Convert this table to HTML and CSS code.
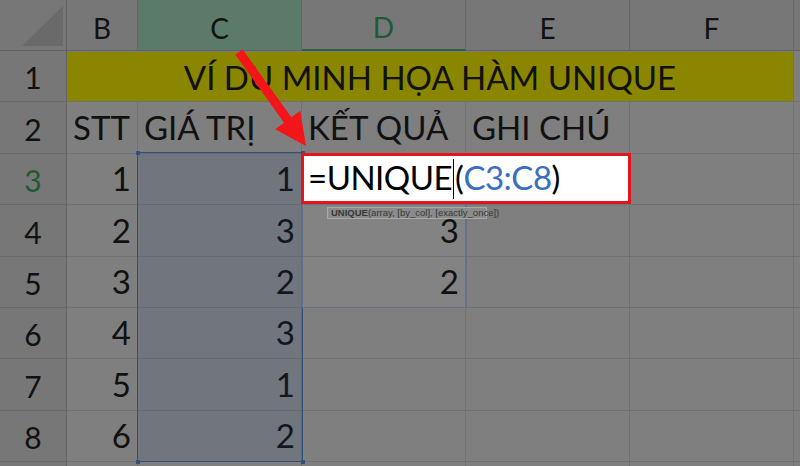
FILE: index.html
```html
<!DOCTYPE html>
<html lang="vi">
<head>
  <meta charset="UTF-8">
  <title>Hàm UNIQUE</title>
  <link rel="stylesheet" href="styles.css">
</head>
<body>
  <div class="sheet">
    <div class="grid">
      <!-- header row -->
      <div class="corner">
        <svg width="66" height="50" viewBox="0 0 66 50"><polygon points="22,46 63,6 63,46" fill="#6a6a6a"/></svg>
      </div>
      <div class="colhead">B</div>
      <div class="colhead picked">C</div>
      <div class="colhead active">D</div>
      <div class="colhead">E</div>
      <div class="colhead">F</div>
      <div class="colhead"></div>

      <!-- row 1 -->
      <div class="rowhead">1</div>
      <div class="cell title">VÍ DU MINH HỌA HÀM UNIQUE</div>
      <div class="cell"></div>

      <!-- row 2 -->
      <div class="rowhead">2</div>
      <div class="cell">STT</div>
      <div class="cell">GIÁ TRỊ</div>
      <div class="cell">KẾT QUẢ</div>
      <div class="cell">GHI CHÚ</div>
      <div class="cell"></div>
      <div class="cell"></div>

      <!-- row 3 -->
      <div class="rowhead active">3</div>
      <div class="cell num">1</div>
      <div class="cell num">1</div>
      <div class="cell"></div>
      <div class="cell"></div>
      <div class="cell"></div>
      <div class="cell"></div>

      <div class="rowhead">4</div>
      <div class="cell num">2</div>
      <div class="cell num">3</div>
      <div class="cell num spill">3</div>
      <div class="cell"></div>
      <div class="cell"></div>
      <div class="cell"></div>

      <div class="rowhead">5</div>
      <div class="cell num">3</div>
      <div class="cell num">2</div>
      <div class="cell num spill">2</div>
      <div class="cell"></div>
      <div class="cell"></div>
      <div class="cell"></div>

      <div class="rowhead">6</div>
      <div class="cell num">4</div>
      <div class="cell num">3</div>
      <div class="cell"></div>
      <div class="cell"></div>
      <div class="cell"></div>
      <div class="cell"></div>

      <div class="rowhead">7</div>
      <div class="cell num">5</div>
      <div class="cell num">1</div>
      <div class="cell"></div>
      <div class="cell"></div>
      <div class="cell"></div>
      <div class="cell"></div>

      <div class="rowhead">8</div>
      <div class="cell num">6</div>
      <div class="cell num">2</div>
      <div class="cell"></div>
      <div class="cell"></div>
      <div class="cell"></div>
      <div class="cell"></div>

      <div class="rowhead"></div>
      <div class="cell"></div>
      <div class="cell"></div>
      <div class="cell"></div>
      <div class="cell"></div>
      <div class="cell"></div>
      <div class="cell"></div>
    </div>

    <!-- overlays: selected range, spill range, cell editor, hint, arrow -->
    <div class="range">
      <span class="handle tl"></span><span class="handle tr"></span>
      <span class="handle bl"></span><span class="handle br"></span>
    </div>
    <div class="spill-box"></div>
    <div class="editor">=UNIQUE<span class="caret"></span>(<span class="ref">C3:C8</span>)</div>
    <div class="tip"><b>UNIQUE</b>(array, [by_col], [exactly_once])</div>

    <svg class="arrow" width="800" height="466" viewBox="0 0 800 466">
      <polygon points="242.6,49.3 291.3,117.3 300.2,110.8 306,146 275.2,129.2 284.1,122.7 235.4,54.7" fill="#f2161b"/>
    </svg>
  </div>
</body>
</html>
```

FILE: styles.css
```css
* { box-sizing: border-box; }

body {
  margin: 0;
  background: #7f7f7f;
  font-family: Lato, "Open Sans", sans-serif;
  color: #111;
  overflow: hidden;
}

.sheet {
  position: relative;
  width: 800px;
  height: 466px;
  overflow: hidden;
}

.grid {
  display: grid;
  grid-template-columns: 67px 71px 164px 164px 164px 164px 1fr;
  grid-template-rows: 51px repeat(8, 51.4px) 20px;
}

.corner {
  background: #777;
  border-right: 1px solid #636363;
  border-bottom: 1px solid #636363;
}

.corner svg { display: block; }

.colhead {
  background: #777;
  border-right: 1px solid #666;
  border-bottom: 1px solid #636363;
  display: flex;
  justify-content: center;
  align-items: flex-end;
  padding-bottom: 8px;
  font-size: 28px;
  line-height: 1;
}

.colhead.picked {
  background: #5c7a69;
}

.colhead.active {
  color: #1f5a36;
  border-bottom: 2px solid #2c6141;
}

.rowhead {
  background: #777;
  border-right: 1px solid #636363;
  border-bottom: 1px solid #6a6a6a;
  display: flex;
  justify-content: center;
  align-items: flex-end;
  padding-bottom: 9px;
  font-size: 30px;
  line-height: 1;
}

.rowhead.active {
  color: #1f5a36;
}

.cell {
  background: #7f7f7f;
  border-right: 1px solid #717171;
  border-bottom: 1px solid #717171;
  display: flex;
  align-items: flex-end;
  padding: 0 6px 9px 6px;
  font-size: 33px;
  line-height: 1;
  white-space: nowrap;
}

.cell.num {
  justify-content: flex-end;
}

.cell.spill {
  background: #838383;
}

.title {
  grid-column: span 5;
  background: #8a8600;
  justify-content: center;
  align-items: center;
  padding: 2px 0 0 0;
  border-top: 1px solid #7a7a7a;
}

.range {
  position: absolute;
  left: 137px;
  top: 152px;
  width: 166px;
  height: 310px;
  background: rgba(30, 60, 110, 0.14);
  border: 1px solid #33507e;
}

.handle {
  position: absolute;
  width: 4px;
  height: 4px;
  background: #33507e;
}

.handle.tl { left: -2px; top: -2px; }
.handle.tr { right: -3px; top: -2px; }
.handle.bl { left: -2px; bottom: -3px; }
.handle.br { right: -3px; bottom: -3px; }

.spill-box {
  position: absolute;
  left: 302px;
  top: 204px;
  width: 165px;
  height: 104px;
  border: 1px solid #62728a;
}

.editor {
  position: absolute;
  left: 301px;
  top: 153px;
  width: 330px;
  height: 51px;
  background: #fff;
  border: 3px solid #e3151c;
  display: flex;
  align-items: flex-end;
  padding: 0 0 7px 4px;
  font-size: 33px;
  letter-spacing: -0.5px;
  line-height: 1;
  color: #000;
  white-space: nowrap;
}

.caret {
  display: inline-block;
  width: 1px;
  height: 40px;
  background: #000;
  margin: 0 1px -5px 1px;
  align-self: flex-end;
}

.ref {
  color: #3a6fbf;
}

.tip {
  position: absolute;
  left: 327px;
  top: 207px;
  width: 160px;
  height: 12px;
  background: #8b8b8b;
  border: 1px solid #a9a9a9;
  font-family: "Liberation Sans", Arial, sans-serif;
  font-size: 9.5px;
  line-height: 10px;
  color: #383838;
  padding-left: 3px;
  white-space: nowrap;
}

.arrow {
  position: absolute;
  left: 0;
  top: 0;
  pointer-events: none;
}
```
